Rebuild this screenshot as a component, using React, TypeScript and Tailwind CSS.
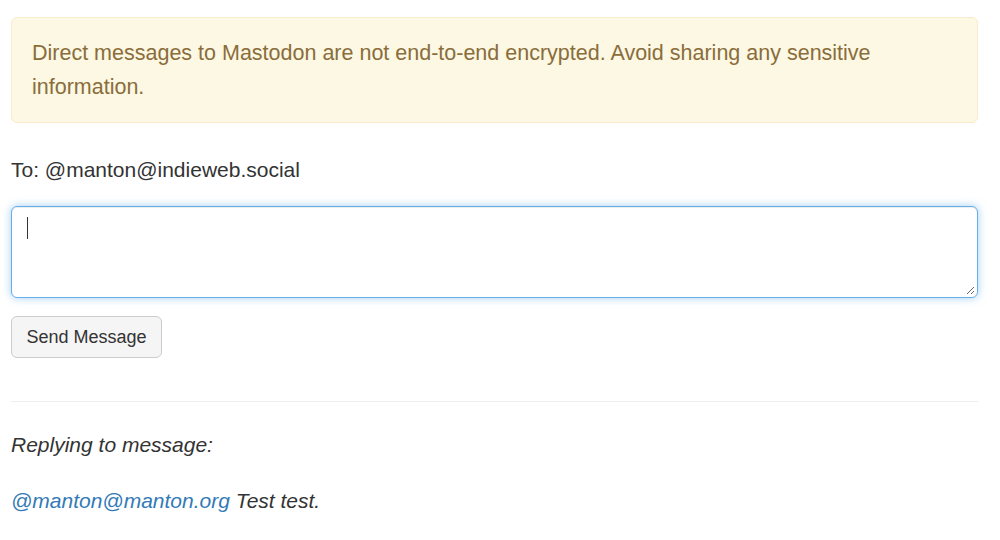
export default function App() {
  return (
    <div className="w-[1000px] h-[540px] bg-white px-[11px] pt-[17px] text-[#333] font-['Liberation_Sans',Arial,sans-serif]">
      <div className="w-[967px]">
        {/* Warning */}
        <div className="rounded-[6px] border border-[#faebcc] bg-[#fcf8e3] px-[20px] py-[18px] text-[21.5px] leading-[34px] text-[#8a6d3b]">
          Direct messages to Mastodon are not end-to-end encrypted. Avoid sharing any sensitive information.
        </div>

        <p className="mt-[33px] text-[21px] leading-[28px]">To: @manton@indieweb.social</p>

        <div className="mt-[22px] relative h-[92px] rounded-[6px] border border-[#66afe9] shadow-[inset_0_1px_1px_rgba(0,0,0,0.075),0_0_8px_rgba(102,175,233,0.6)] bg-white">
          <span className="absolute left-[15px] top-[10px] h-[22px] w-px bg-[#333]" />
          <svg className="absolute right-[2px] bottom-[2px]" width="9" height="9" viewBox="0 0 9 9">
            <path d="M1 8 L8 1 M5 8 L8 5" stroke="#666" strokeWidth="1" />
          </svg>
        </div>

        <button className="mt-[18px] h-[42px] w-[151px] rounded-[6px] border border-[#ccc] bg-[#f5f5f5] text-[18px] text-[#333]">
          Send Message
        </button>

        <div className="mt-[43px] border-t border-[#eee]" />

        <p className="mt-[29px] text-[21px] leading-[28px] italic">Replying to message:</p>

        <p className="mt-[28px] text-[21px] leading-[28px] italic">
          <a className="text-[#337ab7]">@manton@manton.org</a> Test test.
        </p>
      </div>
    </div>
  );
}
